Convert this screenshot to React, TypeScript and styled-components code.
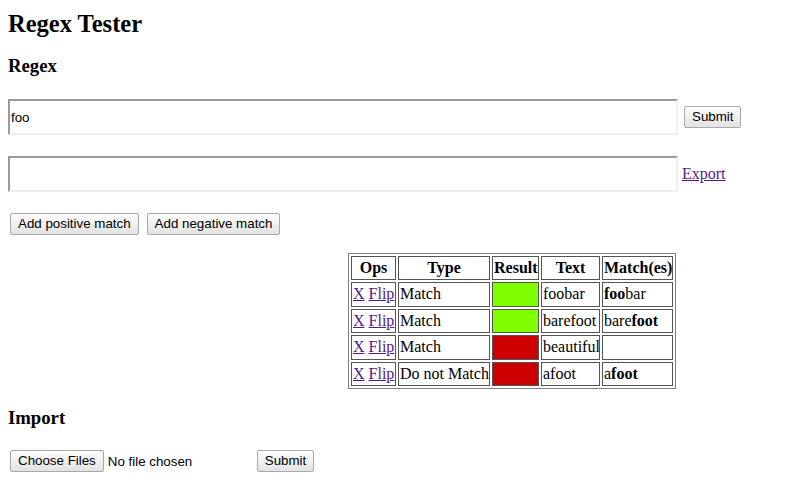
import React from "react";
import styled, { createGlobalStyle } from "styled-components";

const GlobalStyle = createGlobalStyle`
	body {
		margin: 8px;
		font-family: "Liberation Serif", "Times New Roman", serif;
		font-size: 16px;
		color: #000;
		background: #fff;
	}
`;

const Title = styled.h1`
	margin: 2px 0 0 0;
	font-size: 24.5px;
	line-height: 28px;
	font-weight: bold;
`;

const SectionTitle = styled.h3<{ $gap: number }>`
	margin: ${(p) => p.$gap}px 0 0 0;
	font-size: 18.72px;
	line-height: 22px;
	font-weight: bold;
`;

const FieldRow = styled.div<{ $gap: number }>`
	display: flex;
	align-items: center;
	margin-top: ${(p) => p.$gap}px;
	height: 36px;
`;

const TextField = styled.input`
	box-sizing: border-box;
	width: 670px;
	height: 36px;
	margin: 0;
	padding: 1px;
	border-style: solid;
	border-width: 2px;
	border-color: #9a9a9a #eeeeee #eeeeee #9a9a9a;
	font-family: "Liberation Sans", Arial, sans-serif;
	font-size: 13.33px;
	color: #000;
	outline: none;
`;

const Button = styled.button<{ $left?: number }>`
	box-sizing: border-box;
	height: 22px;
	margin: 0 2px 0 ${(p) => p.$left ?? 2}px;
	padding: 0 7px;
	border: 1px solid #a9a9a9;
	border-radius: 2px;
	background: linear-gradient(#fdfdfd, #f0f0f0 50%, #e2e2e2);
	font-family: "Liberation Sans", Arial, sans-serif;
	font-size: 13.33px;
	line-height: 20px;
	color: #000;
`;

const TextLink = styled.a<{ $left?: number }>`
	margin-left: ${(p) => p.$left ?? 0}px;
	color: #551a8b;
	text-decoration: underline;
	cursor: pointer;
`;

const ButtonRow = styled.div<{ $gap: number }>`
	display: flex;
	align-items: center;
	margin-top: ${(p) => p.$gap}px;
	gap: 4px;
`;

const ImportRow = styled.div`
	display: flex;
	align-items: center;
	margin-top: 21px;
`;

const Table = styled.table`
	width: 328px;
	margin: 18px 0 0 340px;
	border: 1px solid #808080;
	border-collapse: separate;
	border-spacing: 2px;
	table-layout: fixed;
`;

const HeadCell = styled.th<{ $w: number }>`
	width: ${(p) => p.$w}px;
	padding: 2px 1px;
	border: 1px solid #555;
	line-height: 18.4px;
	font-weight: bold;
	text-align: center;
	white-space: nowrap;
`;

const Cell = styled.td`
	padding: 2px 1px;
	border: 1px solid #555;
	line-height: 18.4px;
	white-space: nowrap;
`;

const ResultCell = styled(Cell)<{ $pass: boolean }>`
	background: ${(p) => (p.$pass ? "#80ff00" : "#cc0000")};
`;

const FileStatus = styled.span`
	width: 147px;
	margin-left: 2px;
	font-family: "Liberation Sans", Arial, sans-serif;
	font-size: 13.33px;
`;

const columns = [
	{ label: "Ops", w: 41 },
	{ label: "Type", w: 88 },
	{ label: "Result", w: 43 },
	{ label: "Text", w: 55 },
	{ label: "Match(es)", w: 67 },
];

const rows = [
	{ type: "Match", pass: true, text: "foobar", match: ["", "foo", "bar"] },
	{ type: "Match", pass: true, text: "barefoot", match: ["bare", "foot", ""] },
	{ type: "Match", pass: false, text: "beautiful", match: null },
	{ type: "Do not Match", pass: false, text: "afoot", match: ["a", "foot", ""] },
];

const App = () => {
	return (
		<>
			<GlobalStyle />
			<Title>Regex Tester</Title>
			<SectionTitle $gap={17}>Regex</SectionTitle>
			<FieldRow $gap={22}>
				<TextField defaultValue="foo" />
				<Button $left={6}>Submit</Button>
			</FieldRow>
			<FieldRow $gap={21}>
				<TextField />
				<TextLink $left={4}>Export</TextLink>
			</FieldRow>
			<ButtonRow $gap={21}>
				<Button>Add positive match</Button>
				<Button>Add negative match</Button>
			</ButtonRow>
			<Table>
				<tbody>
					<tr>
						{columns.map((col) => (
							<HeadCell key={col.label} $w={col.w}>
								{col.label}
							</HeadCell>
						))}
					</tr>
					{rows.map((row, i) => (
						<tr key={i}>
							<Cell>
								<TextLink>X</TextLink> <TextLink>Flip</TextLink>
							</Cell>
							<Cell>{row.type}</Cell>
							<ResultCell $pass={row.pass} />
							<Cell>{row.text}</Cell>
							<Cell>
								{row.match && (
									<>
										{row.match[0]}
										<b>{row.match[1]}</b>
										{row.match[2]}
									</>
								)}
							</Cell>
						</tr>
					))}
				</tbody>
			</Table>
			<SectionTitle $gap={18}>Import</SectionTitle>
			<ImportRow>
				<Button>Choose Files</Button>
				<FileStatus>No file chosen</FileStatus>
				<Button>Submit</Button>
			</ImportRow>
		</>
	);
};

export default App;
